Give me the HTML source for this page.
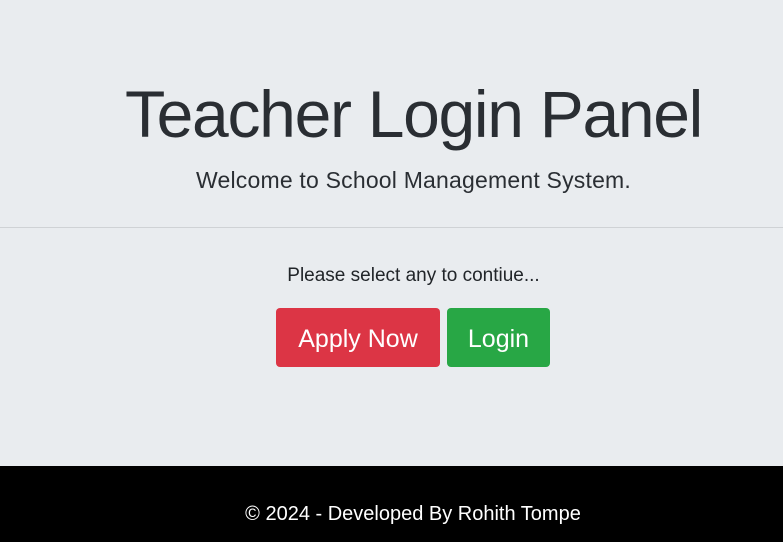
<!DOCTYPE html>
<html><head><meta charset="utf-8"><style>
body{margin:0;width:783px;height:542px;overflow:hidden;font-family:"Liberation Sans",sans-serif;background:#e9ecef;color:#212529;position:relative}
.t{position:absolute;top:74px;left:22px;width:783px;text-align:center;font-size:66px;font-weight:300;letter-spacing:-1.3px;color:#2a2e33;white-space:nowrap;line-height:80px}
.s{position:absolute;top:165px;left:22px;width:783px;text-align:center;font-size:23px;letter-spacing:0.2px;color:#2a2e33;line-height:30px}
.hr{position:absolute;top:227px;left:0;width:783px;height:1px;background:#cfd2d5}
.p{position:absolute;top:264px;left:22px;width:783px;text-align:center;font-size:19px;line-height:24px;white-space:nowrap}
.b{position:absolute;top:308px;height:59px;border-radius:4px;color:#fff;font-size:25px;line-height:62px;text-align:center}
.f{position:absolute;top:466px;left:0;width:783px;height:76px;background:#000;color:#fff;text-align:center;font-size:20px;line-height:24px;padding-top:36px;box-sizing:border-box;padding-left:43px}
</style></head><body>
<div class="t">Teacher Login Panel</div>
<div class="s">Welcome to School Management System.</div>
<div class="hr"></div>
<div class="p">Please select any to contiue...</div>
<div class="b" style="left:276px;width:164px;background:#dc3545">Apply Now</div>
<div class="b" style="left:447px;width:103px;background:#28a745">Login</div>
<div class="f">© 2024 - Developed By Rohith Tompe</div>
</body></html>
